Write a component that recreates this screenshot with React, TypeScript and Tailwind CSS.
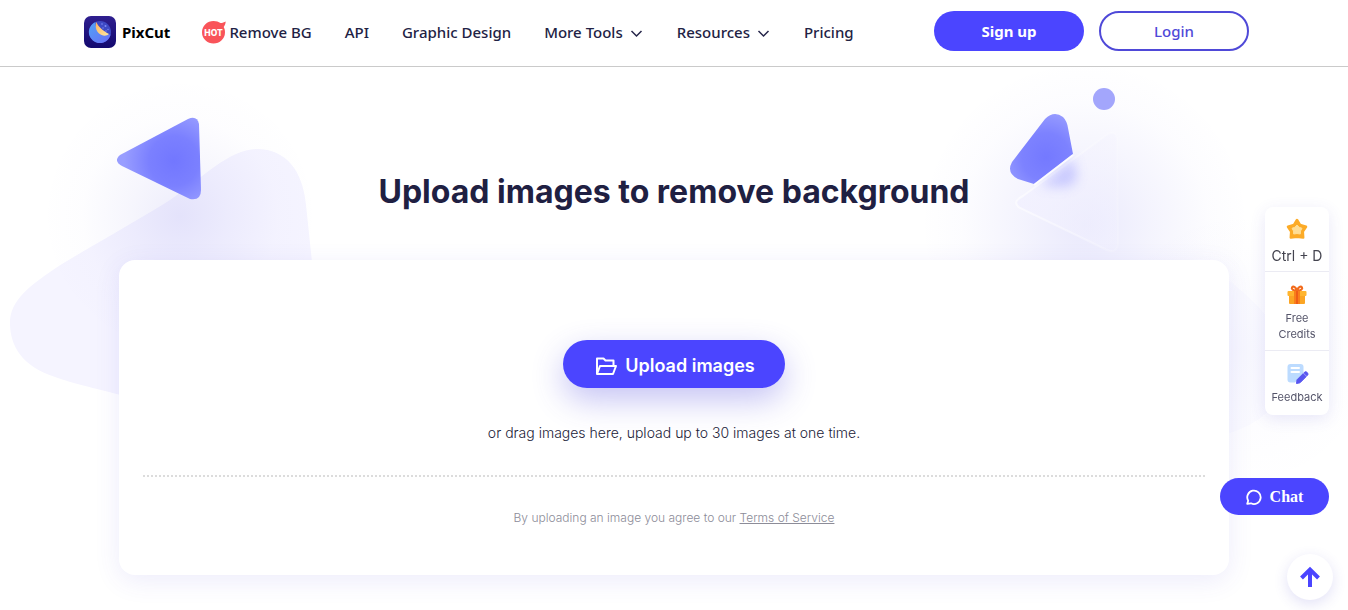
import React from 'react';

function Logo() {
  return (
    <svg viewBox="0 0 32 32" className="h-8 w-8" aria-hidden="true">
      <defs>
        <linearGradient id="logoBg" x1="0" y1="0" x2="0" y2="1">
          <stop offset="0" stopColor="#2f1f8f" />
          <stop offset="1" stopColor="#12086e" />
        </linearGradient>
        <linearGradient id="logoBall" x1="0" y1="0" x2="1" y2="1">
          <stop offset="0" stopColor="#4fa3f7" />
          <stop offset="1" stopColor="#6a6cf6" />
        </linearGradient>
        <linearGradient id="logoMoon" x1="0" y1="0" x2="1" y2="1">
          <stop offset="0" stopColor="#ffb25e" />
          <stop offset="1" stopColor="#ffe9a0" />
        </linearGradient>
      </defs>
      <rect width="32" height="32" rx="7" fill="url(#logoBg)" />
      <circle cx="16" cy="16" r="11" fill="#3d49c4" />
      <path d="M11.500 6 A11 11 0 1 0 26.600 18.500 C17 19.500 10.500 13 11.500 6Z" fill="url(#logoBall)" />
      <path d="M12.200 6 C14.500 11 18.500 14.500 25 18 C22.500 20.500 18 20.300 14.800 17.300 C11.600 14.200 11.200 9.500 12.200 6Z" fill="url(#logoMoon)" />
      <g fill="#7f8bf5">
        <circle cx="18" cy="8" r=".8" />
        <circle cx="21.500" cy="10" r="1" />
        <circle cx="19" cy="12" r=".7" />
        <circle cx="24" cy="13.500" r=".7" />
        <circle cx="22" cy="15" r=".7" />
      </g>
    </svg>
  );
}

function HotBadge() {
  return (
    <svg viewBox="0 0 24 24" className="h-6 w-6" aria-hidden="true">
      <path d="M11.500 1 C14.500 1 16.500 1.700 18.500 3 C20.500 3 22.300 2.400 23.700 1.500 C23.600 3.700 22.800 5.500 21.700 7 C22.600 8.600 23 10.300 23 12.300 A11.500 11.300 0 1 1 11.500 1Z" fill="#f9545a" />
      <text x="11.500" y="15.500" textAnchor="middle" fontSize="8.500" fontWeight="800" fontFamily="Inter, sans-serif" fill="#fff">HOT</text>
    </svg>
  );
}

function Chevron() {
  return (
    <svg viewBox="0 0 14 12" className="mt-1 h-3 w-[14px]" fill="none" stroke="#26264a" strokeWidth="1.500" aria-hidden="true">
      <path d="M1.500 3 L6.500 8 L11.500 3" />
    </svg>
  );
}

function LeftShapes() {
  return (
    <svg viewBox="0 67 400 360" className="absolute top-0 left-0 h-[360px] w-[400px]" aria-hidden="true">
      <defs>
        <radialGradient id="leftTri" gradientUnits="userSpaceOnUse" cx="174" cy="161" r="50">
          <stop offset="0" stopColor="#7277ff" />
          <stop offset=".5" stopColor="#7b80ff" />
          <stop offset="1" stopColor="#989dff" />
        </radialGradient>
        <radialGradient id="leftGlow">
          <stop offset="0" stopColor="#4a46d8" stopOpacity=".1" />
          <stop offset=".35" stopColor="#4a46d8" stopOpacity=".05" />
          <stop offset=".7" stopColor="#4a46d8" stopOpacity=".01" />
          <stop offset="1" stopColor="#4a46d8" stopOpacity="0" />
        </radialGradient>
      </defs>
      <path d="M125 396 C90 387 75 384 55 377 C22 366 10 346 10 323 C10 301 28 286 62 264 C100 241 140 219 170 200 C205 176 230 149 257 149 C286 149 303 171 306 205 L312 262 L312 330Z" fill="#f5f4ff" />
      <circle cx="180" cy="216" r="140" fill="url(#leftGlow)" />
      <path d="M120 155 L188 119 Q197 115 199 124 L201 190 Q201 201 190 199 L122 166 Q113 161 120 155Z" fill="url(#leftTri)" />
    </svg>
  );
}

function RightShapes() {
  return (
    <svg viewBox="908 67 440 540" className="absolute top-0 right-0 h-[540px] w-[440px]" aria-hidden="true">
      <defs>
        <radialGradient id="rightTri" gradientUnits="userSpaceOnUse" cx="1046" cy="157" r="48">
          <stop offset="0" stopColor="#7479ff" />
          <stop offset=".5" stopColor="#7d82ff" />
          <stop offset="1" stopColor="#9a9fff" />
        </radialGradient>
        <radialGradient id="rightGlow">
          <stop offset="0" stopColor="#4a46e8" stopOpacity=".12" />
          <stop offset=".4" stopColor="#4a46e8" stopOpacity=".06" />
          <stop offset=".75" stopColor="#4a46e8" stopOpacity=".015" />
          <stop offset="1" stopColor="#4a46e8" stopOpacity="0" />
        </radialGradient>
        <linearGradient id="glass" x1="0" y1="0" x2="1" y2="0">
          <stop offset="0" stopColor="#f1f0ff" stopOpacity=".8" />
          <stop offset="1" stopColor="#f3f2ff" stopOpacity=".3" />
        </linearGradient>
        <linearGradient id="glassEdge" x1="0" y1="0" x2="1" y2="0">
          <stop offset="0" stopColor="#fff" stopOpacity=".6" />
          <stop offset="1" stopColor="#fff" stopOpacity=".15" />
        </linearGradient>
        <filter id="soft" x="-50%" y="-50%" width="200%" height="200%">
          <feGaussianBlur stdDeviation="6" />
        </filter>
      </defs>
      <circle cx="1085" cy="225" r="165" fill="url(#rightGlow)" />
      <path d="M1200 260 C1262 300 1300 345 1285 385 C1276 412 1250 432 1200 440Z" fill="#fcfcff" />
      <circle cx="1240" cy="350" r="150" fill="url(#rightGlow)" opacity=".25" />
      <circle cx="1104" cy="99" r="11" fill="#a3a6fc" />
      <path d="M1023 196 L1108 134 Q1117 130 1117 141 L1118 243 Q1117 254 1107 250 L1020 208 Q1011 202 1023 196Z" fill="url(#glass)" stroke="url(#glassEdge)" strokeWidth="2" />
      <path d="M1073 158 L1077 176 Q1076 186 1064 187 L1040 186Z" fill="#8c8fff" opacity=".4" filter="url(#soft)" />
      <path d="M1045 119 Q1054 110 1063 117 Q1067 121 1068 128 L1073 154 L1034 184 L1018 179 Q1006 173 1012 162Z" fill="url(#rightTri)" />
      <path d="M1034 185 L1073 155" stroke="#fff" strokeOpacity=".8" strokeWidth="2" />
    </svg>
  );
}

function StarIcon() {
  return (
    <svg viewBox="0 0 24 24" className="h-6 w-6" aria-hidden="true">
      <path d="M12 3 L15 8 L21 9.800 L17.800 14.500 L18.200 20.500 L12 19.800 L5.800 20.500 L6.200 14.500 L3 9.800 L9 8Z" fill="#fcab27" stroke="#fcab27" strokeWidth="2.500" strokeLinejoin="round" />
      <path d="M12 8 L14.200 10.300 L17 11.300 L15.500 14 L15.300 17 L12 16.500 L8.700 17 L8.500 14 L7 11.300 L9.800 10.300Z" fill="#ffdd94" stroke="#ffdd94" strokeWidth="1" strokeLinejoin="round" />
    </svg>
  );
}

function GiftIcon() {
  return (
    <svg viewBox="0 0 24 24" className="h-6 w-6" aria-hidden="true">
      <path d="M12 8 C8 7.500 6 6 7 4.300 C8.500 2.500 11 4.500 12 7.500 C13 4.500 15.500 2.500 17 4.300 C18 6 16 7.500 12 8Z" fill="none" stroke="#f26b1d" strokeWidth="2" />
      <rect x="4" y="11" width="16" height="10" rx="1" fill="#fba524" />
      <rect x="2.500" y="8" width="19" height="5" rx="1" fill="#ffb52f" />
      <path d="M9 8h6v13h-6z" fill="#f97f1b" />
      <path d="M11 8h2v13h-2z" fill="#ef5d17" />
    </svg>
  );
}

function FeedbackIcon() {
  return (
    <svg viewBox="0 0 24 24" className="h-6 w-6" aria-hidden="true">
      <path d="M5.500 2 H15.500 Q18.500 2 18.500 5 V12 L10 20.500 H5.500 Q2.500 20.500 2.500 17.500 V5 Q2.500 2 5.500 2Z" fill="#bcdbff" />
      <path d="M6.500 6 H14 M6.500 10 H14" stroke="#fff" strokeWidth="2" strokeLinecap="round" />
      <path d="M11.500 21.500 L12 17.800 L18.200 11.600 L21.200 14.600 L15 20.800Z M19 10.800 L20 9.900 Q21 9.300 22.300 10.600 Q23.400 12 22.800 12.900 L21.900 13.800Z" fill="#5755f0" stroke="#5755f0" strokeWidth="1" strokeLinejoin="round" />
    </svg>
  );
}

const linkClass = 'flex items-center whitespace-nowrap text-[#222244] hover:text-[#4b45ff]';

function Header() {
  return (
    <header className="relative z-10 border-b border-[#cacaca] bg-white">
      <div className="mx-auto flex h-[66px] max-w-[1180px] items-center pr-[15px] pb-[2px] font-['Noto_Sans','Open_Sans',sans-serif] text-[15px] font-medium">
        <a href="#" className="mr-8 flex items-center gap-[6px] font-bold text-black">
          <Logo />
          PixCut
        </a>
        <nav className="flex items-center gap-[33px]">
          <a href="#" className={`${linkClass} gap-[3px]`}>
            <HotBadge />
            Remove BG
          </a>
          <a href="#" className={linkClass}>API</a>
          <a href="#" className={linkClass}>Graphic Design</a>
          <button type="button" className={`${linkClass} gap-[7px]`}>
            More Tools
            <Chevron />
          </button>
          <button type="button" className={`${linkClass} gap-[7px]`}>
            Resources
            <Chevron />
          </button>
          <a href="#" className={linkClass}>Pricing</a>
        </nav>
        <div className="ml-auto flex gap-[15px] pb-[2px]">
          <button type="button" className="h-10 w-[150px] rounded-full bg-[#4b45ff] font-bold text-white">Sign up</button>
          <button type="button" className="h-10 w-[150px] rounded-full border-2 border-[#4f49d8] bg-white text-[#4f49d8]">Login</button>
        </div>
      </div>
    </header>
  );
}

function UploadCard() {
  return (
    <section className="mx-auto flex max-w-[1110px] flex-col items-center rounded-2xl bg-white px-6 pt-20 pb-[47px] shadow-[0_6px_26px_rgba(75,69,220,0.1)]">
      <button type="button" className="flex h-12 items-center gap-2 rounded-full bg-[#4b45ff] px-[30px] pt-[3px] text-lg font-semibold text-white shadow-[0_12px_32px_rgba(75,69,220,0.32)]">
        <svg viewBox="0 0 24 24" className="h-6 w-6" fill="none" stroke="currentColor" strokeWidth="2" strokeLinejoin="round" aria-hidden="true">
          <path d="M4 20 V4.500 H10.500 L12.500 6.500 H20.500 V11" />
          <path d="M4 20 L7 12 H23 L20 20Z" />
        </svg>
        Upload images
      </button>
      <p className="mt-[33px] text-sm leading-6 font-light text-[#222238]">or drag images here, upload up to 30 images at one time.</p>
      <hr className="mt-[30px] w-full border-t-2 border-dotted border-[#dcdcdc]" />
      <p className="mt-[31px] text-xs leading-5 font-light text-[#8c8c98]">
        By uploading an image you agree to our <a href="#" className="underline">Terms of Service</a>
      </p>
    </section>
  );
}

function SidePanel() {
  return (
    <aside className="fixed top-[207px] right-[19px] z-20 w-16 divide-y divide-[#ebebf3] rounded-lg bg-white text-center text-[11px] leading-4 text-[#55556a] shadow-[0_4px_16px_rgba(75,69,200,0.12)]">
      <button type="button" className="flex w-full flex-col items-center gap-[5px] pt-[10px] pb-[5px] text-sm leading-5 whitespace-nowrap text-[#44444f]">
        <StarIcon />
        Ctrl + D
      </button>
      <button type="button" className="flex w-full flex-col items-center gap-[3px] px-3 pt-[11px] pb-2">
        <GiftIcon />
        Free Credits
      </button>
      <button type="button" className="flex w-full flex-col items-center gap-[3px] pt-[11px] pb-[10px]">
        <FeedbackIcon />
        Feedback
      </button>
    </aside>
  );
}

function FloatingButtons() {
  return (
    <>
      <button type="button" className="fixed right-[19px] bottom-[95px] z-20 flex h-[37px] w-[109px] items-center justify-center gap-2 rounded-full bg-[#4b45ff] font-['Liberation_Serif',serif] text-base font-bold text-white">
        <svg viewBox="0 0 16 16" className="h-4 w-4" fill="none" stroke="currentColor" strokeWidth="1.800" strokeLinejoin="round" aria-hidden="true">
          <path d="M1.200 14.800 L2.200 11.700 A6.700 6.700 0 1 1 5 14.300Z" />
        </svg>
        Chat
      </button>
      <button type="button" aria-label="Back to top" className="fixed right-[15px] bottom-[10px] z-20 flex h-[46px] w-[46px] items-center justify-center rounded-full bg-white shadow-[0_4px_14px_rgba(75,69,200,0.16)]">
        <svg viewBox="0 0 22 22" className="h-[22px] w-[22px]" fill="none" stroke="#4b45ff" strokeWidth="4" aria-hidden="true">
          <path d="M11 21 V4 M2.500 12 L11 3.500 L19.500 12" />
        </svg>
      </button>
    </>
  );
}

export default function App() {
  return (
    <div className="min-h-screen bg-white font-['Inter',sans-serif]">
      <Header />
      <main className="relative overflow-hidden pb-[34px]">
        <LeftShapes />
        <RightShapes />
        <div className="relative">
          <h1 className="pt-[101px] pb-11 text-center text-[32px] leading-[48px] font-bold text-[#1f2042]">Upload images to remove background</h1>
          <UploadCard />
        </div>
      </main>
      <SidePanel />
      <FloatingButtons />
    </div>
  );
}
